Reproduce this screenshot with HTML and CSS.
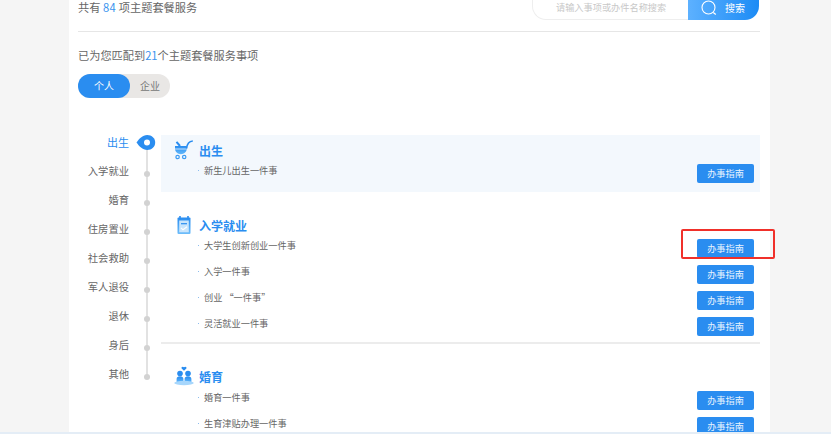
FILE: index.html
```html
<!DOCTYPE html>
<html lang="zh-CN">
<head>
<meta charset="utf-8">
<title>主题套餐服务</title>
<link rel="stylesheet" href="styles.css">
</head>
<body>
<main class="panel">
  <header class="head">
    <p class="total">共有 <b class="count">84</b> 项主题套餐服务</p>
    <div class="search">
      <span class="search-input">请输入事项或办件名称搜索</span>
      <span class="search-btn">
        <svg class="search-icon" width="18" height="18" viewBox="0 0 18 18"><circle cx="8.5" cy="8.5" r="6.5" fill="none" stroke="#fff" stroke-width="1.1"/><path d="M13.3 13.6l2.5 2" stroke="#fff" stroke-width="1.3" fill="none"/></svg>
        <span>搜索</span>
      </span>
    </div>
  </header>
  <p class="match">已为您匹配到<b>21</b>个主题套餐服务事项</p>
  <div class="toggle"><span class="tab tab-on">个人</span><span class="tab">企业</span></div>
  <div class="body-row">
    <nav class="side">
      <div class="side-item side-on"><span class="side-label">出生</span><span class="mark"><svg width="20" height="15" viewBox="0 0 20 15"><path d="M-0.5 7.5C2 4 5.5 0 10.2 0C14.8 0 18.2 3.4 18.2 7.5C18.2 11.6 14.8 15 10.2 15C5.5 15 2 11 -0.5 7.5Z" fill="#2a8df0"/><circle cx="10" cy="7.5" r="3" fill="#fff"/></svg></span></div>
      <div class="side-item"><span class="side-label">入学就业</span><span class="mark"><i class="dot"></i></span></div>
      <div class="side-item"><span class="side-label">婚育</span><span class="mark"><i class="dot"></i></span></div>
      <div class="side-item"><span class="side-label">住房置业</span><span class="mark"><i class="dot"></i></span></div>
      <div class="side-item"><span class="side-label">社会救助</span><span class="mark"><i class="dot"></i></span></div>
      <div class="side-item"><span class="side-label">军人退役</span><span class="mark"><i class="dot"></i></span></div>
      <div class="side-item"><span class="side-label">退休</span><span class="mark"><i class="dot"></i></span></div>
      <div class="side-item"><span class="side-label">身后</span><span class="mark"><i class="dot"></i></span></div>
      <div class="side-item"><span class="side-label">其他</span><span class="mark"><i class="dot"></i></span></div>
    </nav>
    <div class="content">
      <section class="group group-first">
        <h3 class="group-title">
          <svg class="group-icon" width="20" height="20" viewBox="0 0 20 20"><defs><linearGradient id="g1" x1="0" y1="0" x2="0" y2="1"><stop offset="0" stop-color="#2a8df0"/><stop offset="1" stop-color="#62b8fa"/></linearGradient></defs><path d="M1 6h11.8v2.8C12.8 11.8 10 14.2 6.9 14.2C3.6 14.2 1 11.8 1 8.8Z" fill="url(#g1)"/><path d="M2.5 1.8L6 6" stroke="#2a8df0" stroke-width="2" fill="none"/><path d="M1 9h11.8" stroke="#fff" stroke-width=".7"/><path d="M12.6 8.5C13 4.5 14.5 1.2 18.8 1" fill="none" stroke="#2a8df0" stroke-width="1.7"/><circle cx="3.6" cy="17" r="1.7" fill="none" stroke="#3d9cf3" stroke-width="1.2"/><circle cx="10.2" cy="17" r="1.7" fill="none" stroke="#3d9cf3" stroke-width="1.2"/></svg>
          <span>出生</span>
        </h3>
        <ul class="rows">
          <li class="row"><span class="row-text">新生儿出生一件事</span><a class="guide">办事指南</a></li>
        </ul>
      </section>
      <section class="group group-line">
        <h3 class="group-title">
          <svg class="group-icon" width="20" height="20" viewBox="0 0 20 20"><defs><linearGradient id="g2" x1="0" y1="0" x2="0" y2="1"><stop offset="0" stop-color="#2a8df0"/><stop offset="1" stop-color="#6dbdfa"/></linearGradient></defs><rect x="3.5" y="2.5" width="13" height="16.5" rx="1" fill="url(#g2)"/><rect x="5.2" y="5.5" width="9.6" height="11.8" fill="#c9e5fc"/><path d="M6 1v3.4M14 1v3.4" stroke="#2a8df0" stroke-width="1.6"/><path d="M7 8.7h6" stroke="#2a8df0" stroke-width="1.2"/><path d="M7 12.8l2 2 4-3" fill="none" stroke="#fff" stroke-width="1.1"/></svg>
          <span>入学就业</span>
        </h3>
        <ul class="rows">
          <li class="row"><span class="row-text">大学生创新创业一件事</span><a class="guide">办事指南</a></li>
          <li class="row"><span class="row-text">入学一件事</span><a class="guide">办事指南</a></li>
          <li class="row"><span class="row-text">创业&nbsp;“一件事”</span><a class="guide">办事指南</a></li>
          <li class="row"><span class="row-text">灵活就业一件事</span><a class="guide">办事指南</a></li>
        </ul>
      </section>
      <section class="group group-last">
        <h3 class="group-title">
          <svg class="group-icon" width="20" height="20" viewBox="0 0 20 20"><defs><linearGradient id="g3" x1="0" y1="0" x2="0" y2="1"><stop offset="0" stop-color="#2a8df0"/><stop offset="1" stop-color="#5fb6fa"/></linearGradient></defs><path d="M10 4.8L7.6 2.4C6.9 1.1 8.8 0 10 1.3C11.2 0 13.1 1.1 12.4 2.4Z" fill="#2a8df0"/><circle cx="6" cy="7.6" r="2.8" fill="#2a8df0"/><circle cx="14" cy="7.6" r="2.8" fill="#2a8df0"/><path d="M2.6 16.5V13C2.6 11.2 4 10.6 6 10.6C8 10.6 9.4 11.2 9.4 13V16.5ZM10.6 16.5V13C10.6 11.2 12 10.6 14 10.6C16 10.6 17.4 11.2 17.4 13V16.5Z" fill="url(#g3)"/><ellipse cx="10" cy="17" rx="9.8" ry="2.2" fill="#a6d6fc"/></svg>
          <span>婚育</span>
        </h3>
        <ul class="rows">
          <li class="row"><span class="row-text">婚育一件事</span><a class="guide">办事指南</a></li>
          <li class="row"><span class="row-text">生育津贴办理一件事</span><a class="guide">办事指南</a></li>
        </ul>
      </section>
    </div>
  </div>
</main>
<div class="strip"></div>
<div class="callout"></div>
</body>
</html>
```
FILE: styles.css
```css
* { box-sizing: border-box; }
html, body { margin: 0; height: 434px; overflow: hidden; }
body {
  position: relative;
  background: #f5f5f5;
  font-family: "Noto Sans CJK SC", "Liberation Sans", sans-serif;
  color: #666;
  display: flex;
  flex-direction: column;
}
.panel {
  width: 701px;
  height: 432px;
  margin-left: 69px;
  padding: 0 10px 0 9px;
  background: #fff;
  overflow: hidden;
  flex: none;
}
.strip { height: 2px; background: #e4edf6; flex: none; }
.head {
  height: 32px;
  display: flex;
  justify-content: space-between;
  align-items: flex-start;
  border-bottom: 1px solid #e6e6e6;
}
.total { margin: 0; font-size: 11.2px; line-height: 15px; }
.total b, .match b { font-weight: 400; color: #3b94ee; }
.total .count { letter-spacing: .5px; }
.search {
  display: flex;
  width: 227px;
  height: 28px;
  margin-top: -8px;
  margin-right: 1px;
}
.search-input {
  flex: 1;
  border: 1px solid #eee;
  border-right: 0;
  border-radius: 0 0 0 14px;
  font-size: 9.2px;
  line-height: 28px;
  padding-left: 23px;
  color: #c8c8c8;
}
.search-btn {
  flex: 0 0 71px;
  border-radius: 0 0 14px 0;
  background: linear-gradient(90deg, #5db1ff, #1c8bf5);
  color: #fff;
  font-size: 10px;
  line-height: 1;
  padding: 3px 0 0 12px;
  display: flex;
  align-items: center;
  gap: 7px;
}
.search-icon { flex: none; }
.match { margin: 15px 0 0; font-size: 11.2px; line-height: 16px; }
.toggle {
  display: flex;
  width: 92px;
  height: 24px;
  margin-top: 11px;
  border-radius: 12px;
  background: #e9e7e5;
}
.tab {
  flex: 1;
  font-size: 10px;
  line-height: 24px;
  text-align: center;
  color: #777;
}
.tab-on {
  flex: 0 0 52px;
  background: #2a8df0;
  color: #fff;
  border-radius: 12px;
}
.body-row { display: flex; margin-top: 37px; }
.side { position: relative; flex: 0 0 83px; }
.side::before {
  content: "";
  position: absolute;
  left: 68px;
  top: 7px;
  width: 2px;
  height: 235px;
  background: #e2e2e2;
}
.side-item {
  position: relative;
  height: 29px;
  display: flex;
  justify-content: flex-end;
  align-items: flex-start;
  padding-right: 4px;
}
.side-label { font-size: 10.3px; line-height: 14px; margin-right: 8px; color: #666; }
.side-on .side-label { font-size: 11px; color: #2a8df0; }
.mark { width: 20px; height: 20px; display: flex; justify-content: center; }
.mark svg { overflow: visible; }
.dot { width: 6px; height: 6px; margin-top: 7px; border-radius: 50%; background: #d2d2d2; }
.content { flex: 1; min-width: 0; }
.group { padding-top: 22px; }
.group-first { padding: 4px 0 0; height: 57px; background: #f3f8fd; }
.group-line { border-bottom: 2px solid #ececec; height: 152px; }
.group-last { padding-top: 21px; }
.group-title {
  display: flex;
  align-items: center;
  height: 22px;
  margin: 0 0 2px;
  padding-left: 13px;
  font-size: 12px;
  font-weight: 700;
  color: #2a8df0;
}
.group-last .group-title { margin-bottom: 3px; }
.group-icon { flex: none; margin-right: 5px; }
.rows { list-style: none; margin: 0; padding: 0; }
.row {
  height: 26px;
  display: flex;
  justify-content: space-between;
  align-items: flex-start;
  padding: 0 6px 0 37px;
  position: relative;
}
.row::before {
  content: "";
  position: absolute;
  left: 37px;
  top: 7px;
  width: 1px;
  height: 1px;
  background: #8dbdee;
}
.row-text { font-size: 9.2px; line-height: 14px; padding-left: 6px; color: #666; }
.guide {
  width: 57px;
  height: 19px;
  margin-top: 1px;
  border-radius: 2px;
  background: #2a8df0;
  color: #e8f3fe;
  font-size: 9.2px;
  line-height: 19px;
  text-align: center;
}
.callout {
  position: absolute;
  left: 681px;
  top: 229px;
  width: 94px;
  height: 30px;
  border: 2px solid #f0302a;
  border-radius: 2px;
}
```
